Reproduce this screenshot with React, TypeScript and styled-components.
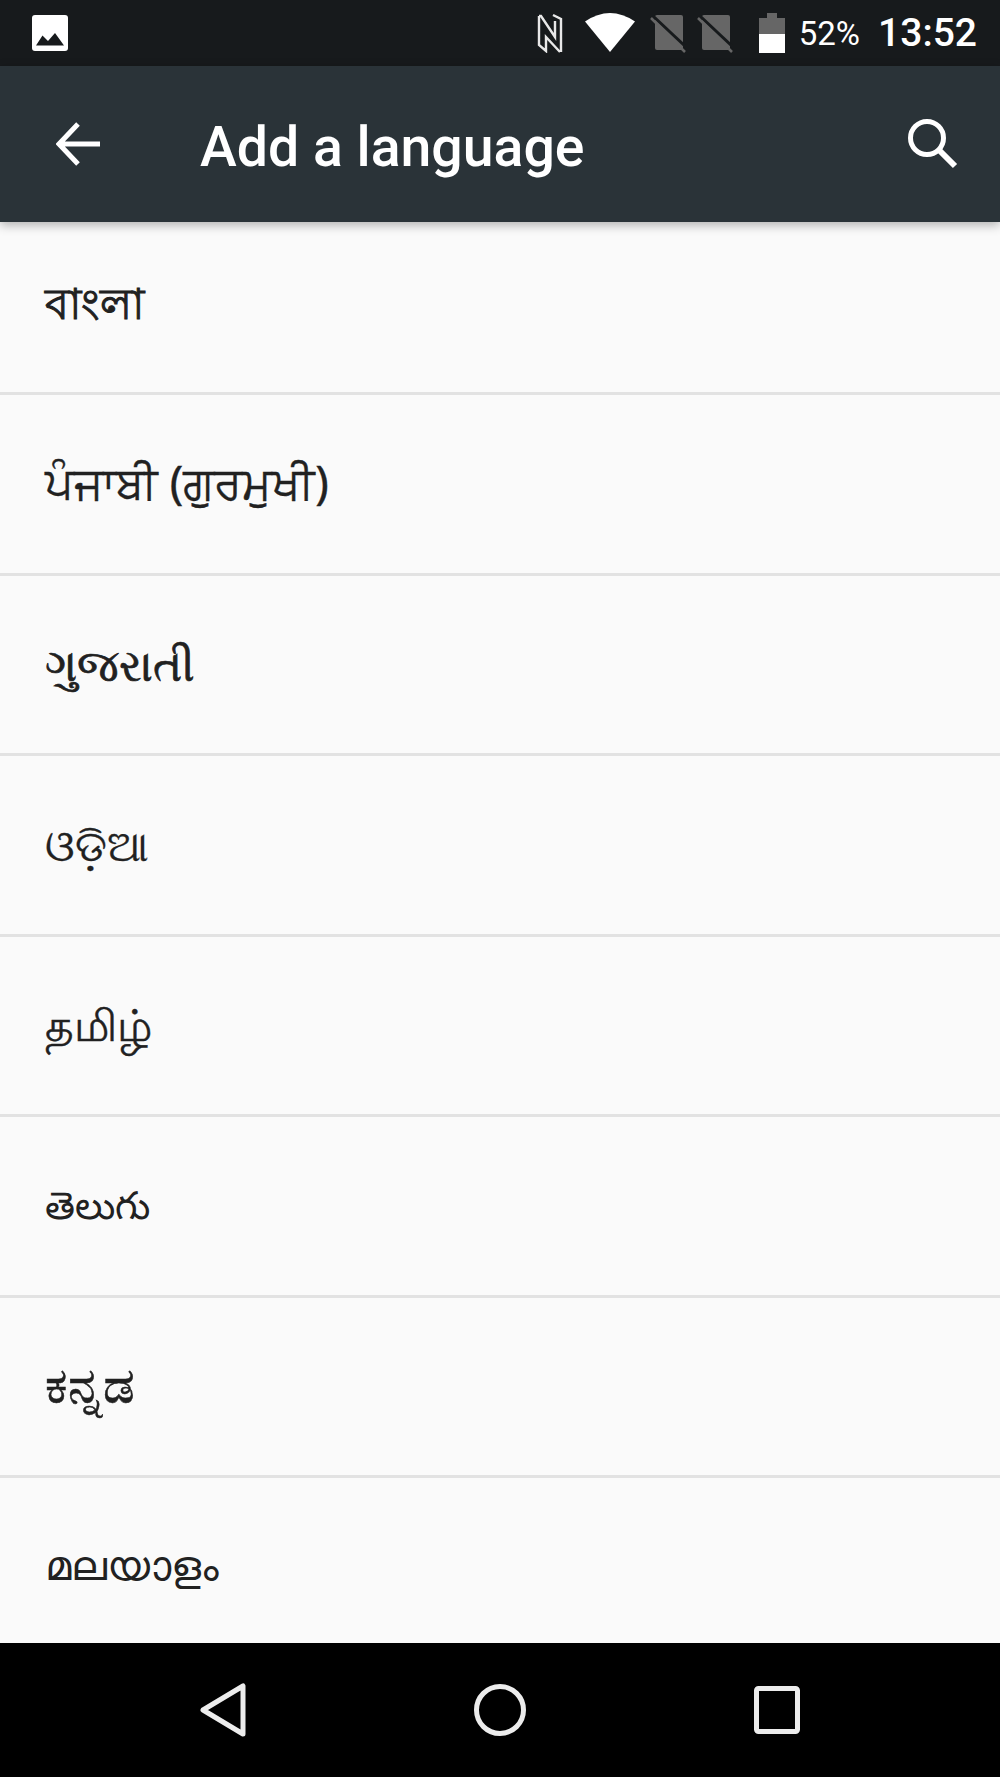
import styled, { createGlobalStyle } from "styled-components";

const languages = [
  { name: "বাংলা", size: 43, stroke: 1, shift: 0 },
  { name: "ਪੰਜਾਬੀ (ਗੁਰਮੁਖੀ)", size: 45, stroke: 0.4, shift: -4 },
  { name: "ગુજરાતી", size: 44, stroke: 0.7, shift: 0 },
  { name: "ଓଡ଼ିଆ", size: 42.5, stroke: 0.3, shift: 0 },
  { name: "தமிழ்", size: 43.5, stroke: 0.4, shift: 0 },
  { name: "తెలుగు", size: 38.5, stroke: 0, shift: 4 },
  { name: "ಕನ್ನಡ", size: 49.5, stroke: 0.5, shift: -4 },
  { name: "മലയാളം", size: 41.5, stroke: 0, shift: 6 },
];

const App = () => {
  return (
    <Screen>
      <GlobalStyle />
      <StatusBar>
        <GalleryIcon viewBox="0 0 36 36">
          <rect width="36" height="36" rx="3" fill="#fff" />
          <path d="M4 30.5 L10.5 20.5 L16 26 L23 18 L32 30.5 Z" fill="#171a1c" />
        </GalleryIcon>
        <StatusRight>
          <NfcIcon width="26" height="40" viewBox="0 0 26 40">
            <path
              d="M2 3 V32 L9 38 V24 L23 39 M2 3 H4 L18 24 V8 M16 2 L24 6 V39"
              fill="none"
              stroke="#e8e8e8"
              strokeWidth="2.4"
            />
          </NfcIcon>
          <WifiIcon width="50" height="40" viewBox="0 0 50 40">
            <path d="M0 8.5 Q25 -8.5 50 8.5 L25 39 Z" fill="#fff" />
          </WifiIcon>
          <SimIcon />
          <SimIcon />
          <BatteryIcon width="26" height="40" viewBox="0 0 26 40">
            <path d="M0 5 H8 V0 H18 V5 H26 V21 H0 Z" fill="#666" />
            <rect y="21" width="26" height="19" fill="#fff" />
          </BatteryIcon>
          <Percent>52%</Percent>
          <Clock>13:52</Clock>
        </StatusRight>
      </StatusBar>
      <AppBar>
        <BackIcon viewBox="0 0 44 44">
          <path d="M44 22 H4 M22 2 L3 22 L22 42" fill="none" stroke="#fff" strokeWidth="5" />
        </BackIcon>
        <Title>Add a language</Title>
        <SearchIcon viewBox="0 0 50 50">
          <circle cx="19" cy="19" r="16.5" fill="none" stroke="#fff" strokeWidth="5" />
          <path d="M30 30 L47 47" fill="none" stroke="#fff" strokeWidth="6" />
        </SearchIcon>
      </AppBar>
      <LanguageList>
        {languages.map((lang) => (
          <LanguageRow key={lang.name} $size={lang.size} $stroke={lang.stroke} $shift={lang.shift}>
            {lang.name}
          </LanguageRow>
        ))}
      </LanguageList>
      <NavBar>
        <NavIcon width="46" height="54" viewBox="0 0 46 54">
          <path d="M43 3 V51 L3 27 Z" fill="none" stroke="#ececec" strokeWidth="5" strokeLinejoin="round" />
        </NavIcon>
        <NavIcon width="52" height="52" viewBox="0 0 52 52">
          <circle cx="26" cy="26" r="23.5" fill="none" stroke="#ececec" strokeWidth="5" />
        </NavIcon>
        <NavIcon width="46" height="48" viewBox="0 0 46 48">
          <rect x="2.5" y="2.5" width="41" height="43" rx="2" fill="none" stroke="#ececec" strokeWidth="5" />
        </NavIcon>
      </NavBar>
    </Screen>
  );
};

const SimIcon = () => (
  <SimSvg width="36" height="40" viewBox="0 0 36 40">
    <path d="M7 2 H31 A2 2 0 0 1 33 4 V35 A2 2 0 0 1 31 37 H7 A2 2 0 0 1 5 35 V4 A2 2 0 0 1 7 2 Z" fill="#666" />
    <path d="M3 3 L37 35" stroke="#171a1c" strokeWidth="3" />
    <path d="M1 5 L35 39" stroke="#666" strokeWidth="2.5" />
  </SimSvg>
);

const GlobalStyle = createGlobalStyle`
  html, body {
    margin: 0;
    padding: 0;
    background: #fafafa;
  }
`;

const Screen = styled.div`
  width: 1000px;
  height: 1777px;
  display: flex;
  flex-direction: column;
  overflow: hidden;
  font-family: "Roboto", "Noto Sans", sans-serif;
`;

const StatusBar = styled.div`
  height: 66px;
  flex: none;
  background: #171a1c;
  display: flex;
  align-items: center;
  justify-content: space-between;
  padding: 0 23px 0 32px;
  box-sizing: border-box;
  color: #fff;
`;

const GalleryIcon = styled.svg`
  width: 36px;
  height: 36px;
`;

const StatusRight = styled.div`
  display: flex;
  align-items: center;
`;

const NfcIcon = styled.svg`
  margin-right: 22px;
`;

const WifiIcon = styled.svg`
  margin-right: 15px;
`;

const SimSvg = styled.svg`
  margin-right: 11px;

  & + & {
    margin-right: 26px;
  }
`;

const BatteryIcon = styled.svg`
  margin-right: 14px;
`;

const Percent = styled.span`
  font-size: 33px;
  margin-right: 18px;
`;

const Clock = styled.span`
  font-size: 39px;
  font-weight: 500;
`;

const AppBar = styled.div`
  height: 156px;
  flex: none;
  background: #2a3338;
  display: flex;
  align-items: center;
  padding: 0 42px 0 56px;
  box-sizing: border-box;
  position: relative;
  z-index: 1;
  box-shadow: 0 3px 10px rgba(0, 0, 0, 0.3);
`;

const BackIcon = styled.svg`
  width: 44px;
  height: 44px;
  flex: none;
`;

const Title = styled.h1`
  margin: 7px 0 0 100px;
  flex: 1;
  color: #fff;
  font-size: 55.4px;
  font-weight: 500;
`;

const SearchIcon = styled.svg`
  width: 50px;
  height: 50px;
  flex: none;
`;

const LanguageList = styled.div`
  flex: 1;
  background: #fafafa;
  display: flex;
  flex-direction: column;
`;

const LanguageRow = styled.div<{ $size: number; $stroke: number; $shift: number }>`
  height: 180.5px;
  box-sizing: border-box;
  flex: none;
  display: flex;
  align-items: center;
  padding-left: 45px;
  padding-top: ${(p) => Math.max(p.$shift, 0)}px;
  padding-bottom: ${(p) => Math.max(-p.$shift, 0)}px;
  border-bottom: 3px solid #e2e2e2;
  color: #212121;
  font-size: ${(p) => p.$size}px;
  -webkit-text-stroke: ${(p) => p.$stroke}px #212121;
  font-family: "Noto Sans", "Noto Sans CJK KR", "DejaVu Sans", sans-serif;

  &:first-child {
    height: 173px;
  }

  &:last-child {
    height: 165px;
    border-bottom: none;
  }
`;

const NavBar = styled.div`
  height: 134px;
  flex: none;
  background: #000;
  display: grid;
  grid-template-columns: 446px 1fr 446px;
  align-items: center;
  justify-items: center;
`;

const NavIcon = styled.svg`
  display: block;
`;

export default App;
